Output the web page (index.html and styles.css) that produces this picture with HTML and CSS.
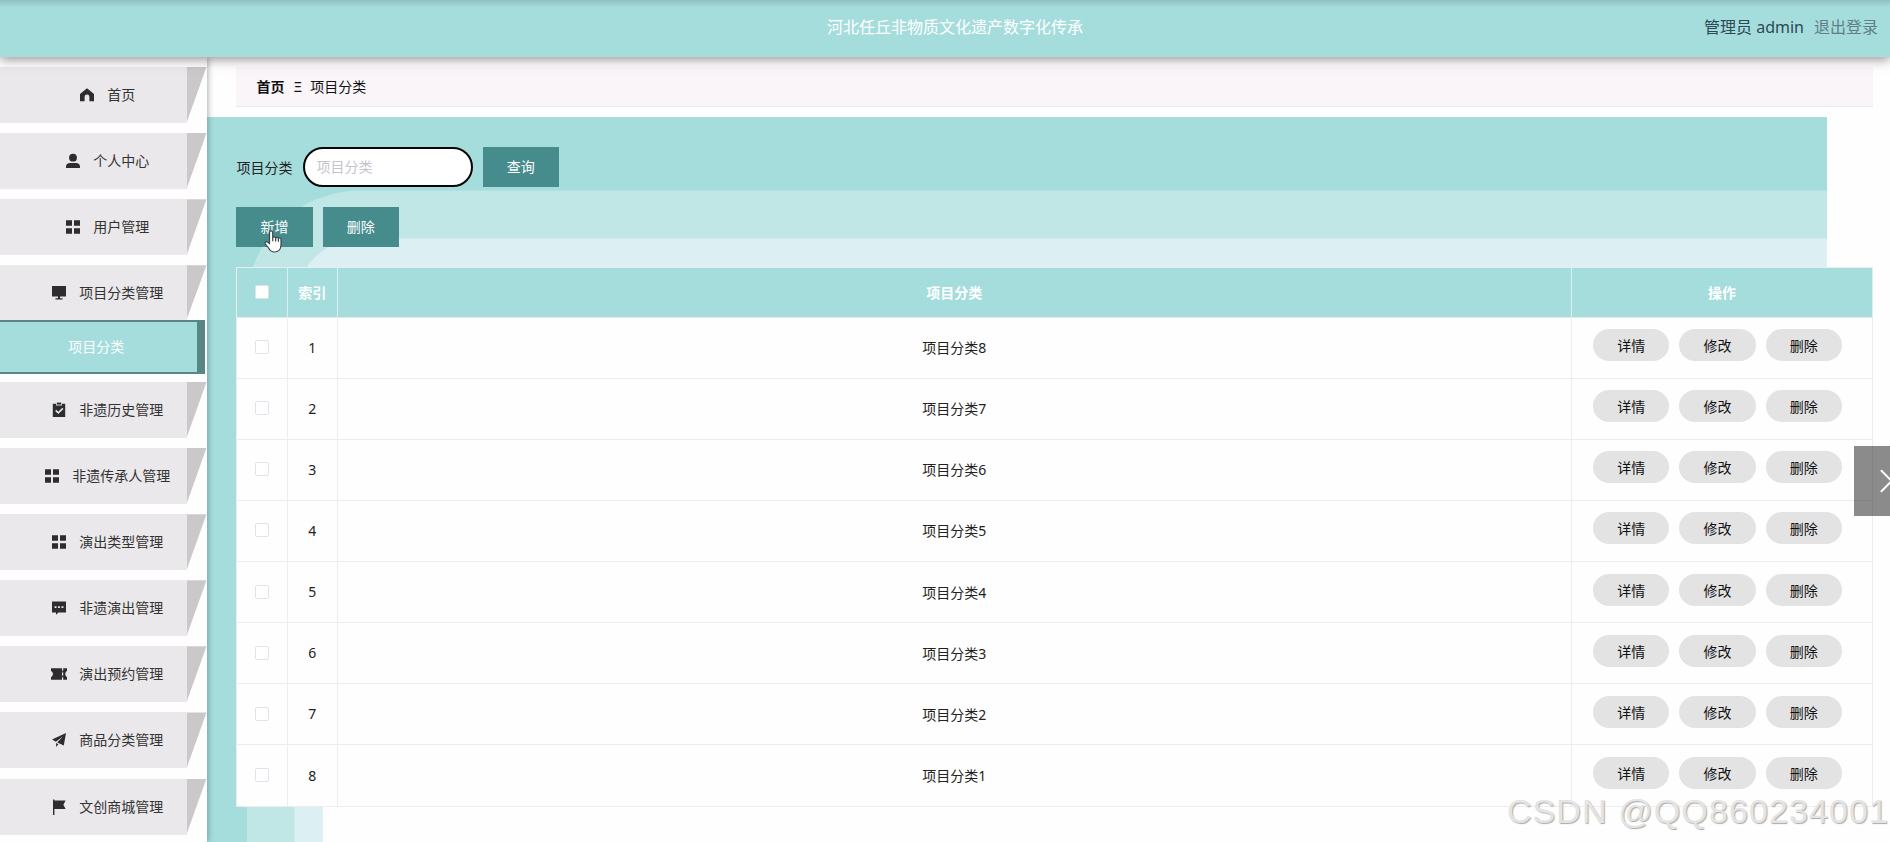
FILE: index.html
```html
<!doctype html>
<html lang="zh-CN">
  <head>
    <title>河北任丘非物质文化遗产数字化传承</title>
    <meta charset="utf-8" />
    <link rel="stylesheet" href="styles.css">
  </head>
  <body>
    <svg class="defs">
      <symbol id="grid" viewBox="0 0 14 14"><path d="M0 .3h6v5.5H0zM8 .3h6v5.5H8zM0 8.2h6v5.5H0zM8 8.2h6v5.5H8z"/></symbol>
    </svg>

    <div class="header">
      <div class="title">河北任丘非物质文化遗产数字化传承</div>
      <div class="user"><span>管理员 admin</span><a class="logout">退出登录</a></div>
    </div>

    <div class="container">
      <div class="sidebar">
        <div class="menu-item"><div class="menu-title"><svg class="icon" viewBox="0 0 14 14"><path d="M7 .2L0 6v7.200h4.600V9a2.400 2.400 0 0 1 4.800 0v4.200H14V6z"/></svg>首页</div></div>
        <div class="menu-item"><div class="menu-title"><svg class="icon" viewBox="0 0 14 14"><circle cx="7" cy="3.7" r="3.9"/><path d="M0 14v-1.400C0 10.200 1.600 9 4 9h6c2.400 0 4 1.200 4 3.600V14z"/></svg>个人中心</div></div>
        <div class="menu-item"><div class="menu-title"><svg class="icon"><use href="#grid"/></svg>用户管理</div></div>
        <div class="menu-item open"><div class="menu-title"><svg class="icon" viewBox="0 0 14 14"><path d="M0 0h14v10.500H0zM6 10.500h2v1.800h2.500v1.200h-7v-1.200H6z"/></svg>项目分类管理</div></div>
        <div class="submenu">项目分类</div>
        <div class="menu-item"><div class="menu-title"><svg class="icon" viewBox="0 0 14 14"><path d="M.8.8H4v1.700h6V.8h3.200V14H.8z"/><path d="M4.800-.4h4.400v2H4.800z"/><path class="line" d="M3.700 7.400l2.600 2.500 4.600-4.500"/></svg>非遗历史管理</div></div>
        <div class="menu-item"><div class="menu-title"><svg class="icon"><use href="#grid"/></svg>非遗传承人管理</div></div>
        <div class="menu-item"><div class="menu-title"><svg class="icon"><use href="#grid"/></svg>演出类型管理</div></div>
        <div class="menu-item"><div class="menu-title"><svg class="icon" viewBox="0 0 14 14"><path d="M0 .5h14v11H6.500L4 13.800v-2.300H0z"/><path class="dots" d="M2.600 5.200h1.900v1.700H2.600zM6 5.200h1.900v1.700H6zM9.500 5.200h1.900v1.700H9.500z"/></svg>非遗演出管理</div></div>
        <div class="menu-item"><div class="menu-title"><svg class="icon" viewBox="0 0 14 14"><path d="M-1 1.300h11v11.400H-1V10c2.600-1 2.600-5 0-6zM11.200 1.300H15V4c-2.200 1-2.200 5 0 6v2.700h-3.800v-2.200h-1v-2h1v-3h-1v-2h1z"/></svg>演出预约管理</div></div>
        <div class="menu-item"><div class="menu-title"><svg class="icon" viewBox="0 0 14 14"><path d="M14 0L0 6.600l3.900 2.200L11 3.300 5.200 9.600l6.600 3zM4.100 9.900v4l2.300-2.700z"/></svg>商品分类管理</div></div>
        <div class="menu-item"><div class="menu-title"><svg class="icon" viewBox="0 0 14 14"><path d="M1-.6h1.400V.6H13.600l-2.200 4.100 2.200 4.200H2.400v6H1z"/></svg>文创商城管理</div></div>
      </div>

      <div class="main">
        <div class="breadcrumb"><b>首页</b><span class="sep">Ξ</span><span>项目分类</span></div>

        <div class="content">
          <svg class="waves" width="1620" height="725">
            <rect class="wave1" width="1620" height="725"/>
            <path class="wave2" d="M40 725V186.500a113 113 0 0 1 113-113H1620V725z"/>
            <path class="wave3" d="M87.500 725V188.500a67 67 0 0 1 67-67H1620V725z"/>
            <path class="wave4" d="M116 725V200a40 40 0 0 1 40-40H1620V725z"/>
          </svg>

          <div class="search">
            <label>项目分类</label>
            <input class="search-input" type="text" placeholder="项目分类">
            <button class="btn">查询</button>
          </div>
          <div class="actions">
            <button class="btn">新增</button>
            <button class="btn">删除</button>
            <svg class="cursor" viewBox="0 0 18 23"><path d="M5.500 13.500V2.500a1.600 1.600 0 0 1 3.200 0v5.300a1.500 1.500 0 0 1 2.900.3 1.500 1.500 0 0 1 2.800.5 1.400 1.400 0 0 1 2.600.9v5c0 4.300-2.200 7.500-6.500 7.500-3.800 0-5-2-6.300-4.500L1.300 13.800c-.9-1.700 1-2.700 2.200-1.700z"/><path class="finger" d="M8.700 7.500v3.800M11.600 8v3.500M14.400 8.500v3.200"/></svg>
          </div>

          <div class="table">
            <div class="row head">
              <div class="cell"><i class="check"></i></div><div class="cell">索引</div><div class="cell">项目分类</div><div class="cell">操作</div>
            </div>
            <div class="row">
              <div class="cell"><i class="check"></i></div><div class="cell">1</div><div class="cell">项目分类8</div>
              <div class="cell ops"><button class="op">详情</button><button class="op">修改</button><button class="op">删除</button></div>
            </div>
            <div class="row">
              <div class="cell"><i class="check"></i></div><div class="cell">2</div><div class="cell">项目分类7</div>
              <div class="cell ops"><button class="op">详情</button><button class="op">修改</button><button class="op">删除</button></div>
            </div>
            <div class="row">
              <div class="cell"><i class="check"></i></div><div class="cell">3</div><div class="cell">项目分类6</div>
              <div class="cell ops"><button class="op">详情</button><button class="op">修改</button><button class="op">删除</button></div>
            </div>
            <div class="row">
              <div class="cell"><i class="check"></i></div><div class="cell">4</div><div class="cell">项目分类5</div>
              <div class="cell ops"><button class="op">详情</button><button class="op">修改</button><button class="op">删除</button></div>
            </div>
            <div class="row">
              <div class="cell"><i class="check"></i></div><div class="cell">5</div><div class="cell">项目分类4</div>
              <div class="cell ops"><button class="op">详情</button><button class="op">修改</button><button class="op">删除</button></div>
            </div>
            <div class="row">
              <div class="cell"><i class="check"></i></div><div class="cell">6</div><div class="cell">项目分类3</div>
              <div class="cell ops"><button class="op">详情</button><button class="op">修改</button><button class="op">删除</button></div>
            </div>
            <div class="row">
              <div class="cell"><i class="check"></i></div><div class="cell">7</div><div class="cell">项目分类2</div>
              <div class="cell ops"><button class="op">详情</button><button class="op">修改</button><button class="op">删除</button></div>
            </div>
            <div class="row">
              <div class="cell"><i class="check"></i></div><div class="cell">8</div><div class="cell">项目分类1</div>
              <div class="cell ops"><button class="op">详情</button><button class="op">修改</button><button class="op">删除</button></div>
            </div>
          </div>
        </div>
      </div>
    </div>

    <div class="next"><svg width="10" height="24" viewBox="0 0 10 24"><path d="M1.500 1.800L11.700 12 1.500 22.200"/></svg></div>
    <div class="watermark">CSDN @QQ860234001</div>
  </body>
</html>
```
FILE: styles.css
```css
* {
  box-sizing: border-box;
}

body {
  margin: 0;
  height: 842px;
  overflow: hidden;
  position: relative;
  background: #fefefe;
  color: #222;
  font-family: "Noto Sans", "Noto Sans CJK SC", sans-serif;
  font-size: 14px;
}

button, input {
  font-family: inherit;
  font-size: 14px;
}

.defs {
  position: absolute;
  width: 0;
  height: 0;
}

.header {
  position: relative;
  z-index: 3;
  display: grid;
  grid-template-columns: 1fr auto 1fr;
  align-items: center;
  height: 57px;
  padding: 0 12px 5px;
  background: linear-gradient(#8fbfc1, #a5dddd 7px);
  box-shadow: 0 3px 10px rgba(70, 50, 60, .5);
  font-size: 16px;
}

.title {
  grid-column: 2;
  margin-left: 20px;
  color: #fff;
}

.user {
  display: flex;
  justify-content: flex-end;
  gap: 10px;
  color: #2c4a54;
}

.logout {
  color: #5f7f85;
}

.container {
  display: flex;
  height: 785px;
}

.sidebar {
  position: relative;
  z-index: 2;
  flex: none;
  width: 206.500px;
  padding-top: 10px;
  background: #fefefe;
  box-shadow: 1px 0 6px rgba(40, 60, 70, .4);
}

.menu-item {
  display: flex;
  height: 56px;
  margin-bottom: 10.120px;
}

.menu-item::after {
  content: '';
  width: 20px;
  background: #cbc8c9;
  clip-path: polygon(0 0, 100% 0, 0 100%);
}

.menu-item.open {
  height: 54.300px;
  margin-bottom: 0;
}

.menu-title {
  display: flex;
  align-items: center;
  justify-content: center;
  gap: 13px;
  width: 186.500px;
  padding: 0 0 2px 29px;
  background: #eae8ea;
  color: #333;
}

.open .menu-title {
  padding-bottom: 0;
}

.icon {
  width: 14px;
  height: 14px;
  margin-top: 2px;
  overflow: visible;
  fill: #2d2d2f;
}

.line {
  fill: none;
  stroke: #eae8ea;
  stroke-width: 1.5;
}

.dots {
  fill: #eae8ea;
}

.submenu {
  width: 204.500px;
  height: 54.500px;
  margin-bottom: 7.800px;
  padding-right: 4px;
  line-height: 50px;
  text-align: center;
  background: #a5dddd;
  border: 2px solid #588686;
  border-width: 2px 8px 2px 0;
  color: #fff;
}

.main {
  flex: 1;
  padding-top: 10px;
}

.breadcrumb {
  display: flex;
  align-items: center;
  height: 40px;
  margin: 0 17px 10px 29.900px;
  padding: 0 0 1px 20px;
  background: #f9f5f9;
  border-bottom: 1px solid #eee8ed;
  color: #111;
}

.sep {
  margin: 0 8px 0 9px;
}

.content {
  position: relative;
  height: 725px;
  padding: 30px 17px 0 29.900px;
}

/* layered backdrop behind the form and table */
.waves {
  position: absolute;
  left: 0.500px;
  top: 0;
  z-index: -1;
}

.wave1 { fill: #a5dddd; }
.wave2 { fill: #c0e6e6; }
.wave3 { fill: #dceff2; }
.wave4 { fill: #fefefe; }

.search, .actions {
  display: flex;
  align-items: center;
  gap: 10.200px;
  height: 40px;
  margin-bottom: 20px;
}

.search-input {
  width: 170px;
  height: 40px;
  padding: 0 12px 1px;
  border: 2px solid #050505;
  border-radius: 20px;
  background: #fff;
  outline: none;
}

.search-input::placeholder {
  color: #c4c4cd;
}

.btn {
  width: 76.200px;
  height: 40px;
  padding: 0 0 2px;
  border: 0;
  background: #468c8d;
  color: #fff;
}

.actions {
  position: relative;
}

.cursor {
  position: absolute;
  left: 27.500px;
  top: 22.500px;
  width: 18px;
  height: 23px;
  fill: #fff;
  stroke: #40454f;
  stroke-width: 1.200;
}

.finger {
  fill: none;
}

.table {
  border: 1px solid #e6eef0;
  border-width: 1px 0 0 1px;
  background: #fefefe;
}

.row {
  display: grid;
  grid-template-columns: 50.300px 50px 1fr 301px;
  height: 61.150px;
}

.head {
  height: 49.500px;
  background: #a5dddd;
  color: #fff;
  font-weight: bold;
}

.cell {
  display: flex;
  align-items: center;
  justify-content: center;
  padding-bottom: 1px;
  border: 1px solid #ebedf1;
  border-width: 0 1px 1px 0;
}

.head .cell {
  border-color: #dceeee;
}

.check {
  width: 14px;
  height: 14px;
  border: 1px solid #e0e3ea;
  border-radius: 2px;
  background: #fff;
}

.ops {
  gap: 10px;
  padding: 0 9px 5px 0;
}

.op {
  width: 76.200px;
  height: 32px;
  padding: 0;
  border: 0;
  border-radius: 16px;
  background: #e4e3e4;
  color: #111;
}

.next {
  position: absolute;
  right: 0;
  top: 446px;
  z-index: 4;
  display: flex;
  align-items: center;
  justify-content: flex-end;
  width: 36px;
  height: 70px;
  background: rgba(0, 0, 0, .45);
}

.next path {
  fill: none;
  stroke: #fff;
  stroke-width: 2;
  stroke-linecap: round;
}

.watermark {
  position: absolute;
  right: 1px;
  bottom: 12px;
  z-index: 5;
  color: #e4e4e4;
  font: 34px/38px "Liberation Sans", sans-serif;
  letter-spacing: 1.100px;
  text-shadow: 1px 1px 1px #aaa;
  white-space: nowrap;
}
```
